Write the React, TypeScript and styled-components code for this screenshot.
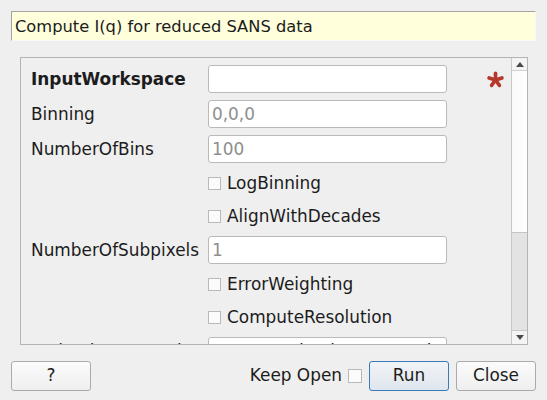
import React from "react";
import styled, { createGlobalStyle } from "styled-components";

const Global = createGlobalStyle`
  html, body { margin: 0; padding: 0; background: #efefef; }
  body { font-family: "DejaVu Sans", sans-serif; font-size: 16.9px; color: #1c1c1c; }
`;

const Window = styled.div`
  width: 547px;
  height: 400px;
  box-sizing: border-box;
  padding: 11px 11px 0 11px;
  display: flex;
  flex-direction: column;
  background: #efefef;
`;

const Description = styled.div`
  height: 30px;
  box-sizing: border-box;
  border-top: 1px solid #a3a3a3;
  border-left: 1px solid #a3a3a3;
  border-right: 1px solid #f8f8f8;
  border-bottom: 1px solid #f8f8f8;
  background: #ffffdc;
  display: flex;
  align-items: center;
  padding-left: 3px;
  white-space: nowrap;
  font-size: 16.3px;
`;

const Panel = styled.div`
  margin: 16px 8px 0 9px;
  height: 288px;
  box-sizing: border-box;
  border: 1px solid #b4b4b4;
  display: flex;
`;

const Content = styled.div`
  flex: 1;
  overflow: hidden;
  padding: 7px 0 0 10px;
`;

const Form = styled.div`
  display: grid;
  grid-template-columns: 177px 239px 1fr;
  row-gap: 7px;
  align-items: center;
`;

const Label = styled.div<{ $bold?: boolean }>`
  grid-column: 1;
  font-weight: ${(p) => (p.$bold ? "bold" : "normal")};
  white-space: nowrap;
`;

const Input = styled.div<{ $placeholder?: boolean }>`
  grid-column: 2;
  height: 28px;
  box-sizing: border-box;
  background: #ffffff;
  border: 1px solid #bababa;
  border-radius: 3px;
  padding-left: 3px;
  display: flex;
  align-items: center;
  white-space: nowrap;
  overflow: hidden;
  color: ${(p) => (p.$placeholder ? "#8e8e8e" : "#1c1c1c")};
`;

const Mark = styled.div`
  grid-column: 3;
  display: flex;
  align-items: center;
  padding-left: 40px;
  height: 28px;
`;

const CheckRow = styled.label`
  grid-column: 2;
  height: 26px;
  display: flex;
  align-items: center;
  gap: 6px;
  white-space: nowrap;
`;

const Box = styled.span<{ $size?: number }>`
  display: inline-block;
  width: ${(p) => p.$size ?? 13}px;
  height: ${(p) => p.$size ?? 13}px;
  box-sizing: border-box;
  border: 1px solid #b9b9b9;
  background: #fbfbfb;
  flex: none;
`;

const ScrollBar = styled.div`
  width: 15px;
  flex: none;
  display: flex;
  flex-direction: column;
  border-left: 1px solid #c9c9c9;
`;

const Arrow = styled.div<{ $h: number }>`
  height: ${(p) => p.$h}px;
  flex: none;
  display: flex;
  align-items: center;
  justify-content: center;
  background: #f4f4f4;
`;

const Thumb = styled.div`
  height: 163px;
  flex: none;
  box-sizing: border-box;
  background: linear-gradient(to right, #f9f9f9, #ffffff);
  border-top: 1px solid #d0d0d0;
  border-bottom: 1px solid #c4c4c4;
`;

const Track = styled.div`
  flex: 1;
  background: #e3e3e3;
  border-bottom: 1px solid #c9c9c9;
`;

const Footer = styled.div`
  margin-top: 16px;
  display: flex;
  align-items: center;
  line-height: 1;
`;

const Button = styled.div<{ $default?: boolean }>`
  width: 80px;
  height: 30px;
  box-sizing: border-box;
  border: 1px solid ${(p) => (p.$default ? "#3b7ab8" : "#ababab")};
  border-radius: 3px;
  background: ${(p) =>
    p.$default
      ? "linear-gradient(#f1f4f7, #dfe6ed)"
      : "linear-gradient(#fbfbfb, #efefef)"};
  display: flex;
  align-items: center;
  justify-content: center;
  padding-bottom: 2px;
`;

const Spacer = styled.div`
  flex: 1;
`;

const KeepOpen = styled.label`
  display: flex;
  align-items: center;
  gap: 6px;
  margin-right: 7px;
`;

const KeepText = styled.span`
  padding-bottom: 2px;
`;

const Gap = styled.div`
  width: 7px;
`;

const Asterisk = () => (
  <svg width="17" height="17" viewBox="0 0 17 17">
    {[0, 72, 144, 216, 288].map((a) => (
      <line
        key={a}
        x1="8.5"
        y1="9"
        x2="8.5"
        y2="2.3"
        stroke="#b6382b"
        strokeWidth="3.6"
        strokeLinecap="round"
        transform={`rotate(${a} 8.5 9)`}
      />
    ))}
  </svg>
);

const Tri = ({ up }: { up?: boolean }) => (
  <svg width="8" height="5" viewBox="0 0 8 5">
    <polygon points={up ? "0,5 8,5 4,0" : "0,0 8,0 4,5"} fill="#4a4a4a" />
  </svg>
);

export default function App() {
  return (
    <>
      <Global />
      <Window>
        <Description>Compute I(q) for reduced SANS data</Description>
        <Panel>
          <Content>
            <Form>
              <Label $bold>InputWorkspace</Label>
              <Input />
              <Mark>
                <Asterisk />
              </Mark>
              <Label>Binning</Label>
              <Input $placeholder>0,0,0</Input>
              <Label>NumberOfBins</Label>
              <Input $placeholder>100</Input>
              <CheckRow>
                <Box />
                LogBinning
              </CheckRow>
              <CheckRow>
                <Box />
                AlignWithDecades
              </CheckRow>
              <Label>NumberOfSubpixels</Label>
              <Input $placeholder>1</Input>
              <CheckRow>
                <Box />
                ErrorWeighting
              </CheckRow>
              <CheckRow>
                <Box />
                ComputeResolution
              </CheckRow>
              <Label>ReductionProperties</Label>
              <Input>__sans_reduction_properties</Input>
            </Form>
          </Content>
          <ScrollBar>
            <Arrow $h={12}>
              <Tri up />
            </Arrow>
            <Thumb />
            <Track />
            <Arrow $h={13}>
              <Tri />
            </Arrow>
          </ScrollBar>
        </Panel>
        <Footer>
          <Button>?</Button>
          <Spacer />
          <KeepOpen>
            <KeepText>Keep Open</KeepText>
            <Box $size={14} />
          </KeepOpen>
          <Button $default>Run</Button>
          <Gap />
          <Button>Close</Button>
        </Footer>
      </Window>
    </>
  );
}
